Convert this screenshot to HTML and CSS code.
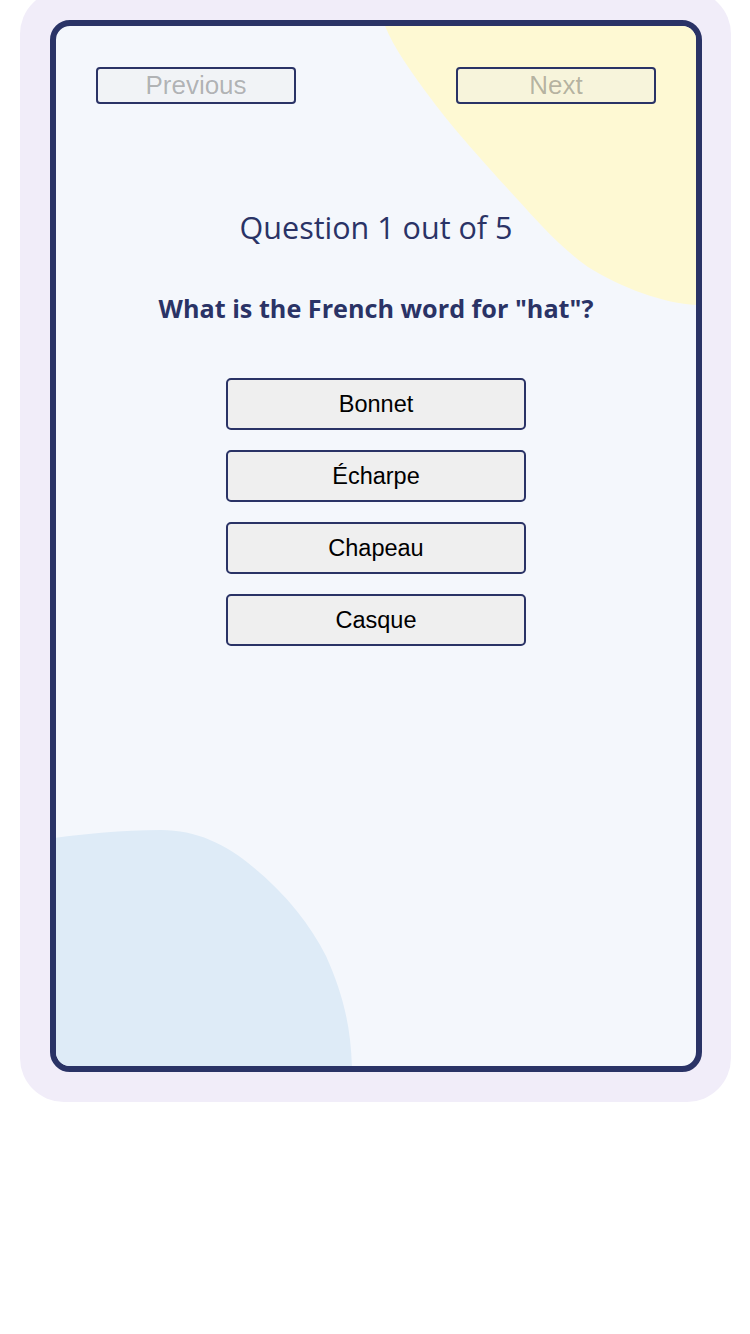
FILE: index.html
```html
<!DOCTYPE html>
<html lang="en">
<head>
<meta charset="utf-8">
<title>Quiz</title>
<link rel="stylesheet" href="styles.css">
</head>
<body>
<div class="frame">
  <div class="card">
    <svg class="blob blob-yellow" width="320" height="290" viewBox="0 0 320 290" aria-hidden="true">
      <path d="M330 -10 L330 279 L321 279 C 290 278 245 262 212 241 C 185 222 162 196 142 174 C 120 150 78 104 56 74 C 35 46 18 22 9 0 L 7 -10 Z" fill="#fef9d3"/>
    </svg>
    <svg class="blob blob-blue" width="300" height="240" viewBox="0 0 300 240" aria-hidden="true">
      <path d="M-10 13 C 20 9 60 4 105 4 C 140 4 170 18 197 41 C 230 68 255 100 270 130 C 288 170 296 205 296 250 L -10 250 Z" fill="#deebf7"/>
    </svg>
    <div class="nav">
      <button class="nav-btn" disabled>Previous</button>
      <button class="nav-btn" disabled>Next</button>
    </div>
    <h2 class="counter">Question 1 out of 5</h2>
    <p class="question">What is the French word for "hat"?</p>
    <div class="options">
      <button class="option">Bonnet</button>
      <button class="option">Écharpe</button>
      <button class="option">Chapeau</button>
      <button class="option">Casque</button>
    </div>
  </div>
</div>
</body>
</html>
```

FILE: styles.css
```css
* { box-sizing: border-box; }
html, body { margin: 0; padding: 0; background: #ffffff; }
body { font-family: "Open Sans", "Noto Sans", sans-serif; }

.frame {
  margin: -10px 0 0 20px;
  width: 711px;
  height: 1112px;
  padding: 30px 29px 30px 30px;
  background: #f1edf9;
  border-radius: 44px;
}

.card {
  position: relative;
  overflow: hidden;
  height: 1052px;
  background: #f4f7fc;
  border: 6px solid #2a3366;
  border-radius: 20px;
  padding: 41px 40px 0 40px;
  display: flex;
  flex-direction: column;
  align-items: center;
}

.blob { position: absolute; }
.blob-yellow { top: 0; right: 0; }
.blob-blue { bottom: 0; left: 0; }

.nav {
  position: relative;
  width: 100%;
  display: flex;
  justify-content: space-between;
}

.nav-btn {
  width: 200px;
  height: 37px;
  padding: 0;
  border: 2px solid #2a3366;
  border-radius: 4px;
  background: rgba(236, 236, 236, 0.35);
  color: rgba(16, 16, 16, 0.3);
  font-family: "Liberation Sans", Arial, sans-serif;
  font-size: 26px;
  line-height: 33px;
}

.counter {
  position: relative;
  margin: 103px 0 0 0;
  font-size: 30.5px;
  font-weight: 400;
  line-height: 40px;
  color: #2a3366;
}

.question {
  position: relative;
  margin: 45px 0 0 0;
  font-size: 25.2px;
  font-weight: 700;
  line-height: 32px;
  color: #2a3366;
}

.options {
  position: relative;
  margin-top: 54px;
  display: flex;
  flex-direction: column;
  gap: 20px;
}

.option {
  width: 300px;
  height: 52px;
  padding: 0;
  border: 2px solid #2a3366;
  border-radius: 5px;
  background: #efefef;
  color: #000000;
  font-family: "Liberation Sans", Arial, sans-serif;
  font-size: 23.5px;
}
```
